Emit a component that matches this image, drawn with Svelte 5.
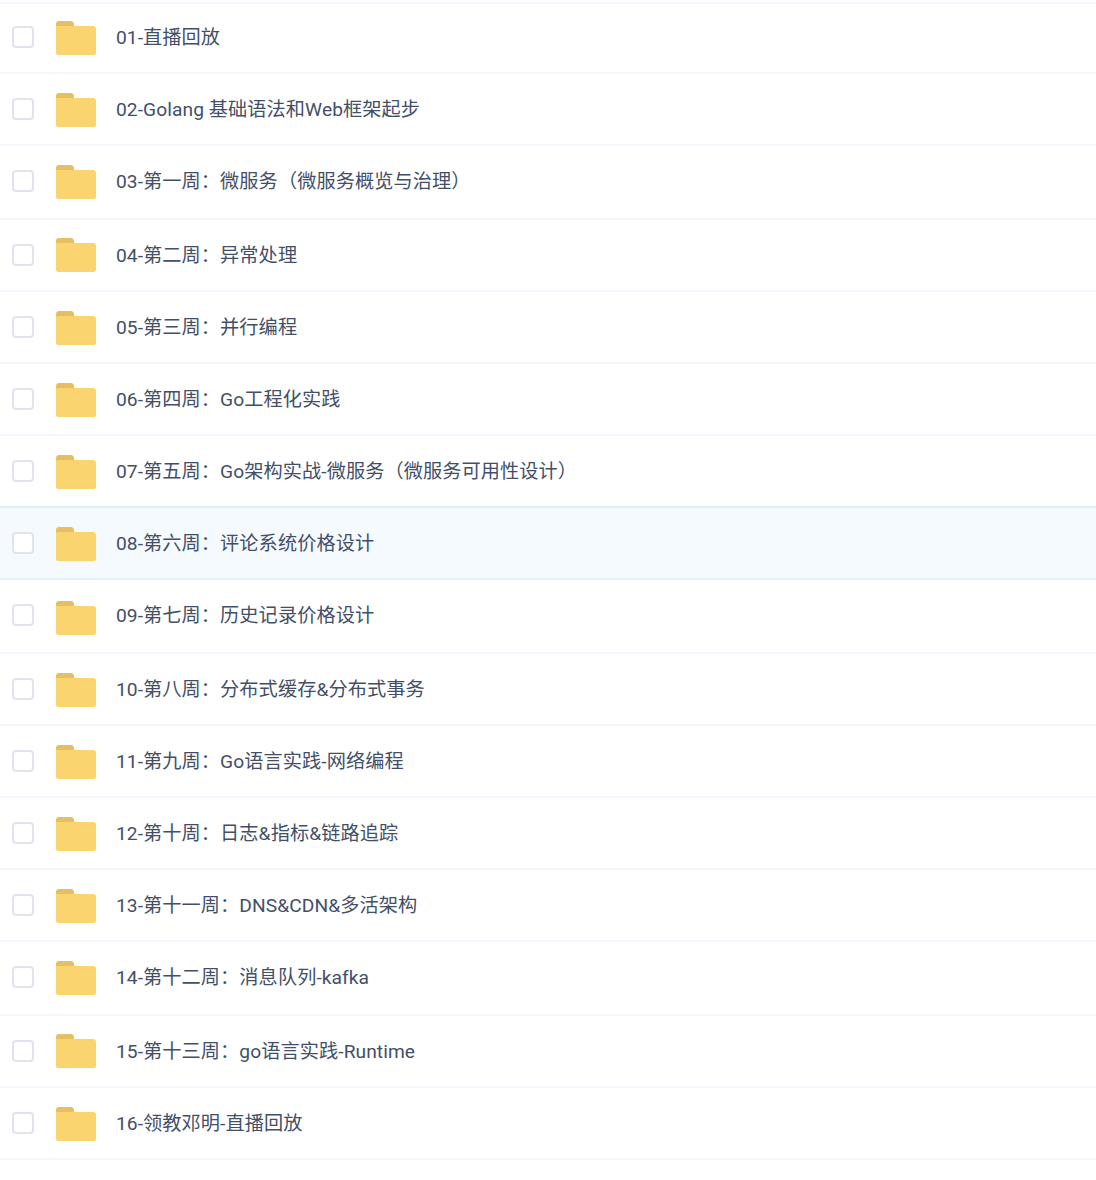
<script lang="ts">
    // tall rows are 2px higher in the reference, shift nudges the folder icon
    const folders = [
        { name: '01-直播回放' },
        { name: '02-Golang 基础语法和Web框架起步' },
        { name: '03-第一周：微服务（微服务概览与治理）', tall: true },
        { name: '04-第二周：异常处理', shift: -1 },
        { name: '05-第三周：并行编程' },
        { name: '06-第四周：Go工程化实践' },
        { name: '07-第五周：Go架构实战-微服务（微服务可用性设计）' },
        { name: '08-第六周：评论系统价格设计', active: true },
        { name: '09-第七周：历史记录价格设计', tall: true, shift: 2 },
        { name: '10-第八周：分布式缓存&分布式事务' },
        { name: '11-第九周：Go语言实践-网络编程' },
        { name: '12-第十周：日志&指标&链路追踪' },
        { name: '13-第十一周：DNS&CDN&多活架构' },
        { name: '14-第十二周：消息队列-kafka', tall: true },
        { name: '15-第十三周：go语言实践-Runtime', shift: -1 },
        { name: '16-领教邓明-直播回放' }
    ];
</script>

<div class="list">
    {#each folders as folder}
        <div class="row" class:tall={folder.tall} class:active={folder.active}>
            <span class="check"></span>
            <svg class="folder" style="margin-top: {folder.shift ?? 0}px" width="40" height="34" viewBox="0 0 40 34" aria-hidden="true">
                <path d="M0 3a3 3 0 0 1 3-3h12a3 3 0 0 1 3 2.5V6H0z" fill="#e5c063" />
                <path d="M0 5h37a3 3 0 0 1 3 3v24a2 2 0 0 1-2 2H2a2 2 0 0 1-2-2z" fill="#fad56f" />
            </svg>
            <span class="name">{folder.name}</span>
        </div>
    {/each}
</div>

<style>
    :global(body) {
        background: #fff;
    }

    .list {
        font-family: Roboto, "Noto Sans CJK SC", sans-serif;
    }

    .row {
        display: flex;
        align-items: flex-start;
        box-sizing: border-box;
        height: 72px;
        padding-top: 19px;
        border-top: 2px solid #f3f6fc;
    }

    .row:first-child {
        height: 70px;
        margin-top: 2px;
        padding-top: 17px;
    }

    .row:last-child {
        height: 74px;
        border-bottom: 2px solid #f3f6fc;
    }

    .row.tall {
        height: 74px;
    }

    .row.active {
        background: #f5fafe;
        border-top-color: #e1effb;
    }

    .row.active + .row {
        border-top-color: #e1effb;
    }

    .check {
        box-sizing: border-box;
        width: 22px;
        height: 22px;
        margin: 5px 0 0 12px;
        background: #fff;
        border: 2px solid #dfe4ee;
        border-radius: 4px;
    }

    .folder {
        margin-left: 22px;
    }

    .name {
        margin: 2px 0 0 20px;
        font-size: 19.2px;
        line-height: 30px;
        letter-spacing: 0.07px;
        color: #434f69;
    }
</style>
